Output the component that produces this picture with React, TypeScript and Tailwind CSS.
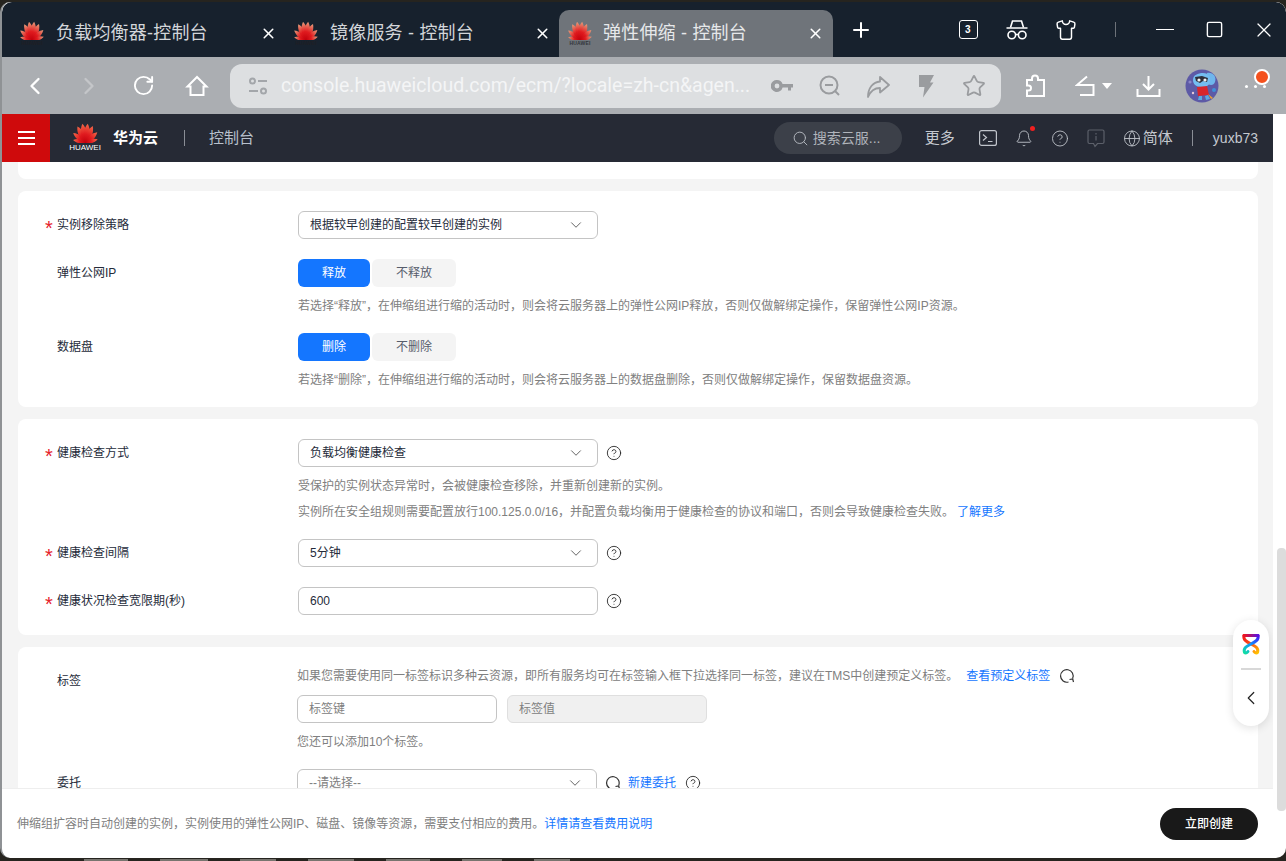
import { Bell, ChevronDown, ChevronLeft, ChevronRight, CircleHelp, Globe, Plus, RotateCw, Search, Shirt, Square, Star, X } from "lucide-react";

// ─── Logos ────────────────────────────────────────────────────────────────────
const PETALS: [number, number][] = [[-76, 0.66], [-50, 0.82], [-25, 0.95], [-8, 1], [8, 1], [25, 0.95], [50, 0.82], [76, 0.66]];

const Petals = ({ id, size, light = "#f0846a", dark = "#c2000b" }: { id: string; size: number; light?: string; dark?: string }) => (
  <svg width={size} height={size * 0.75} viewBox="0 0 24 18" className="shrink-0">
    <defs>
      <linearGradient id={id} x1="0" y1="0" x2="0" y2="1">
        <stop offset="0" stopColor={light} />
        <stop offset="0.55" stopColor="#e01b1f" />
        <stop offset="1" stopColor={dark} />
      </linearGradient>
    </defs>
    {PETALS.map(([a, s]) => (
      <path
        key={a}
        transform={`translate(12 17.5) rotate(${a}) scale(${s})`}
        d="M0 0 C-3.8 -5 -3.6 -12 -0.4 -17 C3.2 -12 3.8 -5 0 0 Z"
        fill={`url(#${id})`}
      />
    ))}
  </svg>
);

const TabLogo = ({ id, label }: { id: string; label: string }) => (
  <div className="flex flex-col items-center w-[26px] shrink-0">
    <Petals id={id} size={26} light="#e8a07e" />
    <span className={`text-[5px] leading-[6px] font-bold ${label}`}>HUAWEI</span>
  </div>
);

const RailLogo = () => (
  <svg width="20" height="22" viewBox="0 0 20 22" fill="none" strokeWidth="3" strokeLinecap="round">
    <defs>
      <linearGradient id="railA" gradientUnits="userSpaceOnUse" x1="3" y1="2" x2="17" y2="20">
        <stop offset="0" stopColor="#f0141e" />
        <stop offset="0.55" stopColor="#ff5a14" />
        <stop offset="1" stopColor="#ffc400" />
      </linearGradient>
      <linearGradient id="railB" gradientUnits="userSpaceOnUse" x1="17" y1="2" x2="3" y2="20">
        <stop offset="0" stopColor="#4a10f0" />
        <stop offset="0.5" stopColor="#1090ff" />
        <stop offset="1" stopColor="#10e0a0" />
      </linearGradient>
      <linearGradient id="railC" gradientUnits="userSpaceOnUse" x1="3" y1="2" x2="17" y2="2">
        <stop offset="0" stopColor="#f0141e" />
        <stop offset="1" stopColor="#5a10e0" />
      </linearGradient>
    </defs>
    <path d="M3 2.5 C2 7 6 9 10 11 C14 13 18 15 16.5 19.5 C15.5 20.5 14 20 13 18.5" stroke="url(#railA)" />
    <path d="M17 2.5 C18 7 14 9 10 11 C6 13 2 15 3.5 19.5 C4.5 20.5 6 20 7 18.5" stroke="url(#railB)" />
    <path d="M3 2.5 H17" stroke="url(#railC)" />
  </svg>
);

const Avatar = () => (
  <svg width="34" height="34" viewBox="0 0 34 34">
    <circle cx="17" cy="17" r="16.5" fill="#5d5aa6" />
    <circle cx="5" cy="13" r="1.6" fill="#8a86c8" />
    <circle cx="29" cy="21" r="2" fill="#3f8fd8" />
    <circle cx="8" cy="24" r="1.2" fill="#e8c8d8" />
    <path d="M22 4 C28 3 32 8 30 13 C29 16 26 17 23 15 Z" fill="#6fb6ec" />
    <path d="M8 11 C8 6 13 4 18 4 C24 4 26 9 25 13 C24 17 20 19 16 18 C11 18 8 15 8 11 Z" fill="#74bdf0" />
    <path d="M10 8 L17 7 L23 9 L22 13 L18 12 L15 14 L11 12 Z" fill="#2e2f3a" />
    <circle cx="14" cy="11" r="1.6" fill="#f2f2f2" />
    <circle cx="20" cy="11" r="1.6" fill="#f2f2f2" />
    <path d="M12 18 L22 17 L24 26 L13 27 Z" fill="#d8262c" />
    <path d="M14 27 L13 31 L17 31 L17 27 Z M20 27 L21 31 L25 30 L23 26 Z" fill="#5aa8e4" />
    <path d="M23 25 L28 29 L26 30 Z" fill="#f0a030" />
  </svg>
);

// ─── Small icons ──────────────────────────────────────────────────────────────
const TabCount = () => (
  <div className="w-[19px] h-[19px] rounded-[3px] border-[1.5px] border-white flex items-center justify-center text-[10px] leading-none font-bold text-white">3</div>
);

const Incognito = () => (
  <svg width="24" height="22" viewBox="0 0 24 22" fill="none" stroke="#fff" strokeWidth="1.6">
    <path d="M5.5 8.5 L7.5 2 H16.5 L18.5 8.5" />
    <path d="M1.5 9 H22.5" />
    <circle cx="6.8" cy="16" r="3.8" />
    <circle cx="17.2" cy="16" r="3.8" />
    <path d="M10.6 15.5 H13.4" />
  </svg>
);

const HomeIcon = () => (
  <svg width="24" height="24" viewBox="0 0 24 24" fill="none" stroke="#fff" strokeWidth="2" strokeLinejoin="miter">
    <path d="M12 3 L2.5 12.5 H5.5 V21 H18.5 V12.5 H21.5 Z" />
  </svg>
);

const SlidersIcon = () => (
  <svg width="20" height="20" viewBox="0 0 20 20" fill="none" stroke="#a3a6aa" strokeWidth="2">
    <circle cx="4.5" cy="5" r="2.5" />
    <path d="M10 5 H19" />
    <path d="M1 15 H10" />
    <circle cx="15.5" cy="15" r="2.5" />
  </svg>
);

const KeyIcon = () => (
  <svg width="22" height="14" viewBox="0 0 22 14" fill="#9a9c9f">
    <path fillRule="evenodd" d="M6 1 a6 6 0 0 1 5.6 4 H22 V8.4 H20 V11.5 H17 V8.4 H11.6 A6 6 0 1 1 6 1 Z M6 4.6 a2.4 2.4 0 1 0 0 4.8 a2.4 2.4 0 0 0 0 -4.8 Z" />
  </svg>
);

const ZoomOutIcon = () => (
  <svg width="22" height="22" viewBox="0 0 22 22" fill="none" stroke="#9a9c9f" strokeWidth="2">
    <circle cx="10" cy="10" r="8.5" />
    <path d="M6 10 H14" />
    <path d="M16 16 L20 20" />
  </svg>
);

const ShareIcon = () => (
  <svg width="24" height="24" viewBox="0 0 24 24" fill="none" stroke="#9a9c9f" strokeWidth="1.8" strokeLinejoin="round">
    <path d="M14 3 L23 11 L14 18.5 V14 C8.5 14 4.5 17 2 23 C2 14 7 8 14 7.5 Z" />
  </svg>
);

const BoltIcon = () => (
  <svg width="18" height="24" viewBox="0 0 18 24" fill="#9a9c9f">
    <path d="M2 1 H17 L13 8.5 H16.5 L6 23.5 L7.5 13 H2 Z" />
  </svg>
);

const ExtensionIcon = () => (
  <svg width="24" height="24" viewBox="0 0 24 24" fill="none" stroke="#fff" strokeWidth="2">
    <path d="M9 6 V4.5 a3 3 0 0 1 6 0 V6 H21 V22 H4 V16.5 H5.5 a2.5 2.5 0 0 0 0 -5 H4 V6 Z" />
  </svg>
);

const UndoIcon = () => (
  <svg width="20" height="21" viewBox="0 0 20 21" fill="none" stroke="#fff" strokeWidth="2">
    <path d="M12 1.5 L2 10 H18.5 V20 H5" />
  </svg>
);

const DownloadIcon = () => (
  <svg width="25" height="24" viewBox="0 0 25 24" fill="none" stroke="#fff" strokeWidth="2">
    <path d="M12.5 2 V15 M7 10 L12.5 15.5 L18 10" />
    <path d="M1.5 15 V22 H23.5 V15" />
  </svg>
);

const TerminalIcon = () => (
  <svg width="18" height="16" viewBox="0 0 18 16" fill="none" stroke="#c0c4cb" strokeWidth="1.2">
    <rect x="0.6" y="0.6" width="16.8" height="14.8" rx="2" />
    <path d="M4 4.5 L7.5 7.5 L4 10.5" />
    <path d="M9 11.5 H13.5" />
  </svg>
);

const InfoBubble = () => (
  <svg width="18" height="19" viewBox="0 0 18 19" fill="none" stroke="#5c606a" strokeWidth="1.2">
    <path d="M2.5 1 H15.5 A1.5 1.5 0 0 1 17 2.5 V13 A1.5 1.5 0 0 1 15.5 14.5 H10.5 L8 17.5 L6.5 14.5 H2.5 A1.5 1.5 0 0 1 1 13 V2.5 A1.5 1.5 0 0 1 2.5 1 Z" />
    <path d="M9 4 V5.5 M9 7 V11.5" />
  </svg>
);

const Reload = () => (
  <svg width="16" height="16" viewBox="0 0 16 16" fill="none" stroke="#333" strokeWidth="1.2" className="shrink-0">
    <path d="M13.6 10.5 A6.3 6.3 0 1 0 9.5 14" />
    <path d="M10.5 11.5 L13.7 11 L14.5 14" />
  </svg>
);

const Help = () => <CircleHelp size={16} strokeWidth={1.3} className="text-[#222] shrink-0" />;

// ─── Form bits ────────────────────────────────────────────────────────────────
const Label: React.FC<{ text: string; required?: boolean }> = ({ text, required }) => (
  <div className="w-[280px] h-7 shrink-0 flex items-center pl-[27px]">
    <span className="w-[12px] h-7 text-[20px] leading-none text-[#e5202a] pt-[7px]">{required ? "*" : ""}</span>
    <span className="text-[#252b3a]">{text}</span>
  </div>
);

const Select: React.FC<{ value: string; muted?: boolean }> = ({ value, muted }) => (
  <div className="w-[300px] h-7 rounded-[6px] border border-[#c4c4c4] flex items-center justify-between pl-[11px] pr-[12px] shrink-0">
    <span className={muted ? "text-[#808080]" : "text-[#252b3a]"}>{value}</span>
    <ChevronDown size={18} strokeWidth={1.2} className="text-[#555]" />
  </div>
);

const Toggle: React.FC<{ on: string; off: string }> = ({ on, off }) => (
  <div className="flex gap-[2px]">
    <div className="w-[72px] h-7 rounded-[6px] bg-[#1476ff] text-white flex items-center justify-center">{on}</div>
    <div className="w-[84px] h-7 rounded-[6px] bg-[#f4f4f4] text-[#575d6c] flex items-center justify-center">{off}</div>
  </div>
);

const Hint: React.FC<{ className?: string; children: React.ReactNode }> = ({ className = "", children }) => (
  <p className={`leading-[18px] text-[#808080] whitespace-nowrap ${className}`}>{children}</p>
);

const Link: React.FC<{ children: React.ReactNode; className?: string }> = ({ children, className = "" }) => (
  <span className={`text-[#1476ff] whitespace-nowrap ${className}`}>{children}</span>
);

// ─── Browser chrome ───────────────────────────────────────────────────────────
const TabBar = () => (
  <div className="h-[55px] bg-[#17212d] flex items-end shrink-0 rounded-tl-[10px] rounded-tr-[10px] text-[18px] tracking-[0.2px] text-[#d3d6da]">
    <div className="w-[275px] h-[47px] flex items-center pl-[17px]">
      <TabLogo id="tabA" label="text-[#1f1f24]" />
      <span className="ml-[11px] whitespace-nowrap">负载均衡器-控制台</span>
      <X size={17} strokeWidth={2.2} className="ml-auto text-white" />
    </div>
    <div className="w-[282px] h-[47px] flex items-center pl-[16px] pr-[8px]">
      <TabLogo id="tabB" label="text-[#1f1f24]" />
      <span className="ml-[11px] whitespace-nowrap">镜像服务 - 控制台</span>
      <X size={17} strokeWidth={2.2} className="ml-auto text-white" />
    </div>
    <div className="w-[274px] h-[47px] rounded-t-[10px] bg-[#6f747a] flex items-center pl-[8px] pr-[9px]">
      <TabLogo id="tabC" label="text-[#33363b]" />
      <span className="ml-[10px] whitespace-nowrap text-[#e6e8ea]">弹性伸缩 - 控制台</span>
      <X size={17} strokeWidth={2.2} className="ml-auto text-white" />
    </div>
    <div className="w-[56px] h-[55px] flex items-center justify-center"><Plus size={24} strokeWidth={2} className="text-white" /></div>
    <div className="flex-1" />
    <div className="h-[55px] flex items-center text-white">
      <div className="w-[50px] flex justify-center"><TabCount /></div>
      <div className="w-[48px] flex justify-center"><Incognito /></div>
      <div className="w-[50px] flex justify-center"><Shirt size={22} strokeWidth={1.6} /></div>
      <div className="w-[49px] flex justify-center"><div className="w-px h-[15px] bg-[#6d7279]" /></div>
      <div className="w-[50px] flex justify-center"><div className="w-[18px] h-[1.5px] bg-white" /></div>
      <div className="w-[48px] flex justify-center"><Square size={19} strokeWidth={1.4} absoluteStrokeWidth /></div>
      <div className="w-[48px] flex justify-center pl-1"><X size={24} strokeWidth={1.2} /></div>
    </div>
  </div>
);

const Toolbar = () => (
  <div className="h-[57px] bg-[#abaeb2] flex items-center shrink-0 pl-[6px] text-white">
    <div className="w-[54px] flex justify-center"><ChevronLeft size={28} strokeWidth={2} /></div>
    <div className="w-[54px] flex justify-center"><ChevronRight size={28} strokeWidth={2} className="text-[#c4c6c9]" /></div>
    <div className="w-[54px] flex justify-center"><RotateCw size={23} strokeWidth={2} /></div>
    <div className="w-[54px] flex justify-center"><HomeIcon /></div>
    <div className="ml-[6px] w-[771px] h-[44px] rounded-[12px] bg-[#dddfe1] flex items-center pl-[18px] pr-[3px]">
      <SlidersIcon />
      <span className="ml-[13px] text-[19.5px] text-[#f4f5f6] font-['Roboto',sans-serif] whitespace-nowrap">console.huaweicloud.com/ecm/?locale=zh-cn&amp;agen...</span>
      <div className="ml-auto flex items-center">
        <div className="w-[48px] flex justify-center"><KeyIcon /></div>
        <div className="w-[48px] flex justify-center"><ZoomOutIcon /></div>
        <div className="w-[48px] flex justify-center"><ShareIcon /></div>
        <div className="w-[48px] flex justify-center"><BoltIcon /></div>
        <div className="w-[48px] flex justify-center"><Star size={24} strokeWidth={1.8} className="text-[#9a9c9f]" /></div>
      </div>
    </div>
    <div className="w-[68px] flex justify-center"><ExtensionIcon /></div>
    <div className="w-[49px] flex items-center pl-[6px] gap-[7px]">
      <UndoIcon />
      <div className="w-0 h-0 border-x-[5px] border-x-transparent border-t-[6px] border-t-white" />
    </div>
    <div className="w-[60px] flex justify-center"><DownloadIcon /></div>
    <div className="w-[48px] flex justify-center"><Avatar /></div>
    <div className="relative w-[58px] flex justify-center gap-[6px] pt-[2px]">
      <div className="w-[3px] h-[3px] rounded-full bg-white" />
      <div className="w-[3px] h-[3px] rounded-full bg-white" />
      <div className="w-[3px] h-[3px] rounded-full bg-white" />
      <div className="absolute left-[28px] -top-[14px] w-[16px] h-[16px] rounded-full bg-[#f4511e] border-2 border-white" />
    </div>
  </div>
);

const ConsoleHeader = () => (
  <div className="h-[48px] bg-[#262a35] flex items-center shrink-0 text-[15px] text-[#c4c8cf]">
    <div className="w-[48px] h-[48px] bg-[#cf0a0c] flex flex-col items-center justify-center gap-[4px]">
      <div className="w-[17px] h-[2px] bg-white" />
      <div className="w-[17px] h-[2px] bg-white" />
      <div className="w-[17px] h-[2px] bg-white" />
    </div>
    <div className="ml-[20px] w-[30px] flex flex-col items-center">
      <Petals id="headLogo" size={27} light="#f26a4a" />
      <span className="text-[8px] leading-[10px] text-white">HUAWEI</span>
    </div>
    <span className="ml-[13px] text-white font-semibold">华为云</span>
    <div className="ml-[26px] w-px h-[16px] bg-[#8a8e96]" />
    <span className="ml-[24px] text-[#b8c0cc]">控制台</span>
    <div className="ml-auto h-[32px] w-[128px] rounded-full bg-[#3c4049] flex items-center pl-[18px] text-[14px] text-[#b0b4bb]">
      <Search size={17} strokeWidth={1.4} />
      <span className="ml-[4px] whitespace-nowrap">搜索云服...</span>
    </div>
    <span className="ml-[23px]">更多</span>
    <div className="ml-[24px] w-[18px] flex justify-center"><TerminalIcon /></div>
    <div className="relative ml-[18px] w-[18px] flex justify-center">
      <Bell size={19} strokeWidth={1.2} className="text-[#c0c4cb]" />
      <div className="absolute -top-[3px] -right-[2px] w-[5px] h-[5px] rounded-full bg-[#f02020]" />
    </div>
    <div className="ml-[18px] w-[18px] flex justify-center"><CircleHelp size={19} strokeWidth={1.2} className="text-[#c0c4cb]" /></div>
    <div className="ml-[18px] w-[18px] flex justify-center"><InfoBubble /></div>
    <div className="ml-[18px] w-[18px] flex justify-center"><Globe size={19} strokeWidth={1.2} className="text-[#c0c4cb]" /></div>
    <span className="ml-[2px]">简体</span>
    <div className="ml-[19px] w-px h-[16px] bg-[#8a8e96]" />
    <span className="ml-[20px] mr-[15px] text-[14px]">yuxb73</span>
  </div>
);

// ─── Form cards ───────────────────────────────────────────────────────────────
const RemovalCard = () => (
  <section className="mt-3 bg-white rounded-lg pt-5 pb-[18px]">
    <div className="flex">
      <Label text="实例移除策略" required />
      <Select value="根据较早创建的配置较早创建的实例" />
    </div>
    <div className="flex mt-5">
      <Label text="弹性公网IP" />
      <div>
        <Toggle on="释放" off="不释放" />
        <Hint className="mt-[10px]">若选择“释放”，在伸缩组进行缩的活动时，则会将云服务器上的弹性公网IP释放，否则仅做解绑定操作，保留弹性公网IP资源。</Hint>
      </div>
    </div>
    <div className="flex mt-[18px]">
      <Label text="数据盘" />
      <div>
        <Toggle on="删除" off="不删除" />
        <Hint className="mt-[10px]">若选择“删除”，在伸缩组进行缩的活动时，则会将云服务器上的数据盘删除，否则仅做解绑定操作，保留数据盘资源。</Hint>
      </div>
    </div>
  </section>
);

const HealthCard = () => (
  <section className="mt-3 bg-white rounded-lg py-5">
    <div className="flex">
      <Label text="健康检查方式" required />
      <div>
        <div className="flex items-center gap-2">
          <Select value="负载均衡健康检查" />
          <Help />
        </div>
        <Hint className="mt-[10px]">受保护的实例状态异常时，会被健康检查移除，并重新创建新的实例。</Hint>
        <Hint className="mt-2">
          实例所在安全组规则需要配置放行100.125.0.0/16，并配置负载均衡用于健康检查的协议和端口，否则会导致健康检查失败。
          <Link className="ml-[3px]">了解更多</Link>
        </Hint>
      </div>
    </div>
    <div className="flex mt-[18px]">
      <Label text="健康检查间隔" required />
      <div className="flex items-center gap-2">
        <Select value="5分钟" />
        <Help />
      </div>
    </div>
    <div className="flex mt-5">
      <Label text="健康状况检查宽限期(秒)" required />
      <div className="flex items-center gap-2">
        <div className="w-[300px] h-7 rounded-[6px] border border-[#c4c4c4] flex items-center pl-[11px] text-[#252b3a]">600</div>
        <Help />
      </div>
    </div>
  </section>
);

const TagCard = () => (
  <section className="mt-3 bg-white rounded-t-lg pt-5 pb-10">
    <div className="flex">
      <Label text="标签" />
      <div className="-ml-px">
        <div className="flex items-center h-[18px]">
          <Hint>如果您需要使用同一标签标识多种云资源，即所有服务均可在标签输入框下拉选择同一标签，建议在TMS中创建预定义标签。</Hint>
          <Link className="ml-[8px]">查看预定义标签</Link>
          <span className="ml-[9px]"><Reload /></span>
        </div>
        <div className="flex gap-[10px] mt-[10px]">
          <div className="w-[200px] h-7 rounded-[6px] border border-[#c4c4c4] flex items-center pl-[11px] text-[#808080]">标签键</div>
          <div className="w-[200px] h-7 rounded-[6px] border border-[#dfdfdf] bg-[#f0f0f0] flex items-center pl-[11px] text-[#808080]">标签值</div>
        </div>
        <Hint className="mt-[10px]">您还可以添加10个标签。</Hint>
      </div>
    </div>
    <div className="flex mt-[18px]">
      <Label text="委托" />
      <div className="-ml-px flex items-center">
        <Select value="--请选择--" muted />
        <span className="ml-2"><Reload /></span>
        <Link className="ml-[7px]">新建委托</Link>
        <span className="ml-[9px]"><Help /></span>
      </div>
    </div>
  </section>
);

const Footer = () => (
  <div className="h-[70px] bg-white rounded-bl-[10px] border-t border-[#eeeeee] flex items-center justify-between pl-[15px] pr-[15px] shrink-0">
    <p className="text-[#808080] whitespace-nowrap">
      伸缩组扩容时自动创建的实例，实例使用的弹性公网IP、磁盘、镜像等资源，需要支付相应的费用。
      <Link>详情请查看费用说明</Link>
    </p>
    <div className="w-[98px] h-8 rounded-full bg-[#191919] text-white font-medium flex items-center justify-center">立即创建</div>
  </div>
);

// the page behind the window shows through as cut-off text tops along the bottom edge
const BEHIND = ["w-[44px]", "w-[48px]", "w-[36px]", "w-[46px]", "w-[44px]", "w-[40px]", "w-[36px]"];

export default function App() {
  return (
    <div className="w-[1286px] h-[861px] overflow-hidden bg-[#26241f] pt-[2px] font-['Liberation_Sans','Noto_Sans_CJK_SC',sans-serif] text-[12px]">
      <div className="h-[856px] flex flex-col overflow-hidden rounded-t-[10px] rounded-b-[10px] border-l-2 border-[#8f9295] bg-white">
        <TabBar />
        <Toolbar />
        <div className="flex-1 min-h-0 flex">
          <div className="w-[1271px] flex flex-col">
            <ConsoleHeader />
            <main className="relative flex-1 min-h-0 overflow-hidden bg-[#f4f4f4] pl-4 pr-[15px]">
              <div className="h-[17px] bg-white rounded-b-lg" />
              <RemovalCard />
              <HealthCard />
              <TagCard />
              <div className="absolute left-[1231px] top-[458px] w-9 h-[106px] rounded-full bg-white shadow-[0_2px_10px_rgba(0,0,0,0.12)] flex flex-col items-center pt-[13px]">
                <RailLogo />
                <div className="mt-[13px] w-5 h-[2px] bg-[#d8d8d8]" />
                <ChevronLeft size={22} strokeWidth={1.3} className="mt-[17px] text-[#222]" />
              </div>
            </main>
            <Footer />
          </div>
          <div className="flex-1 pl-[4px] pt-[434px]">
            <div className="w-[9px] h-[263px] rounded-[4px] bg-[#dcdcdc]" />
          </div>
        </div>
      </div>
      <div className="flex gap-[32px] pl-[84px] pt-px">
        {BEHIND.map((w, i) => (
          <div key={i} className={`${w} h-[2px] bg-[#77756f]`} />
        ))}
      </div>
    </div>
  );
}
